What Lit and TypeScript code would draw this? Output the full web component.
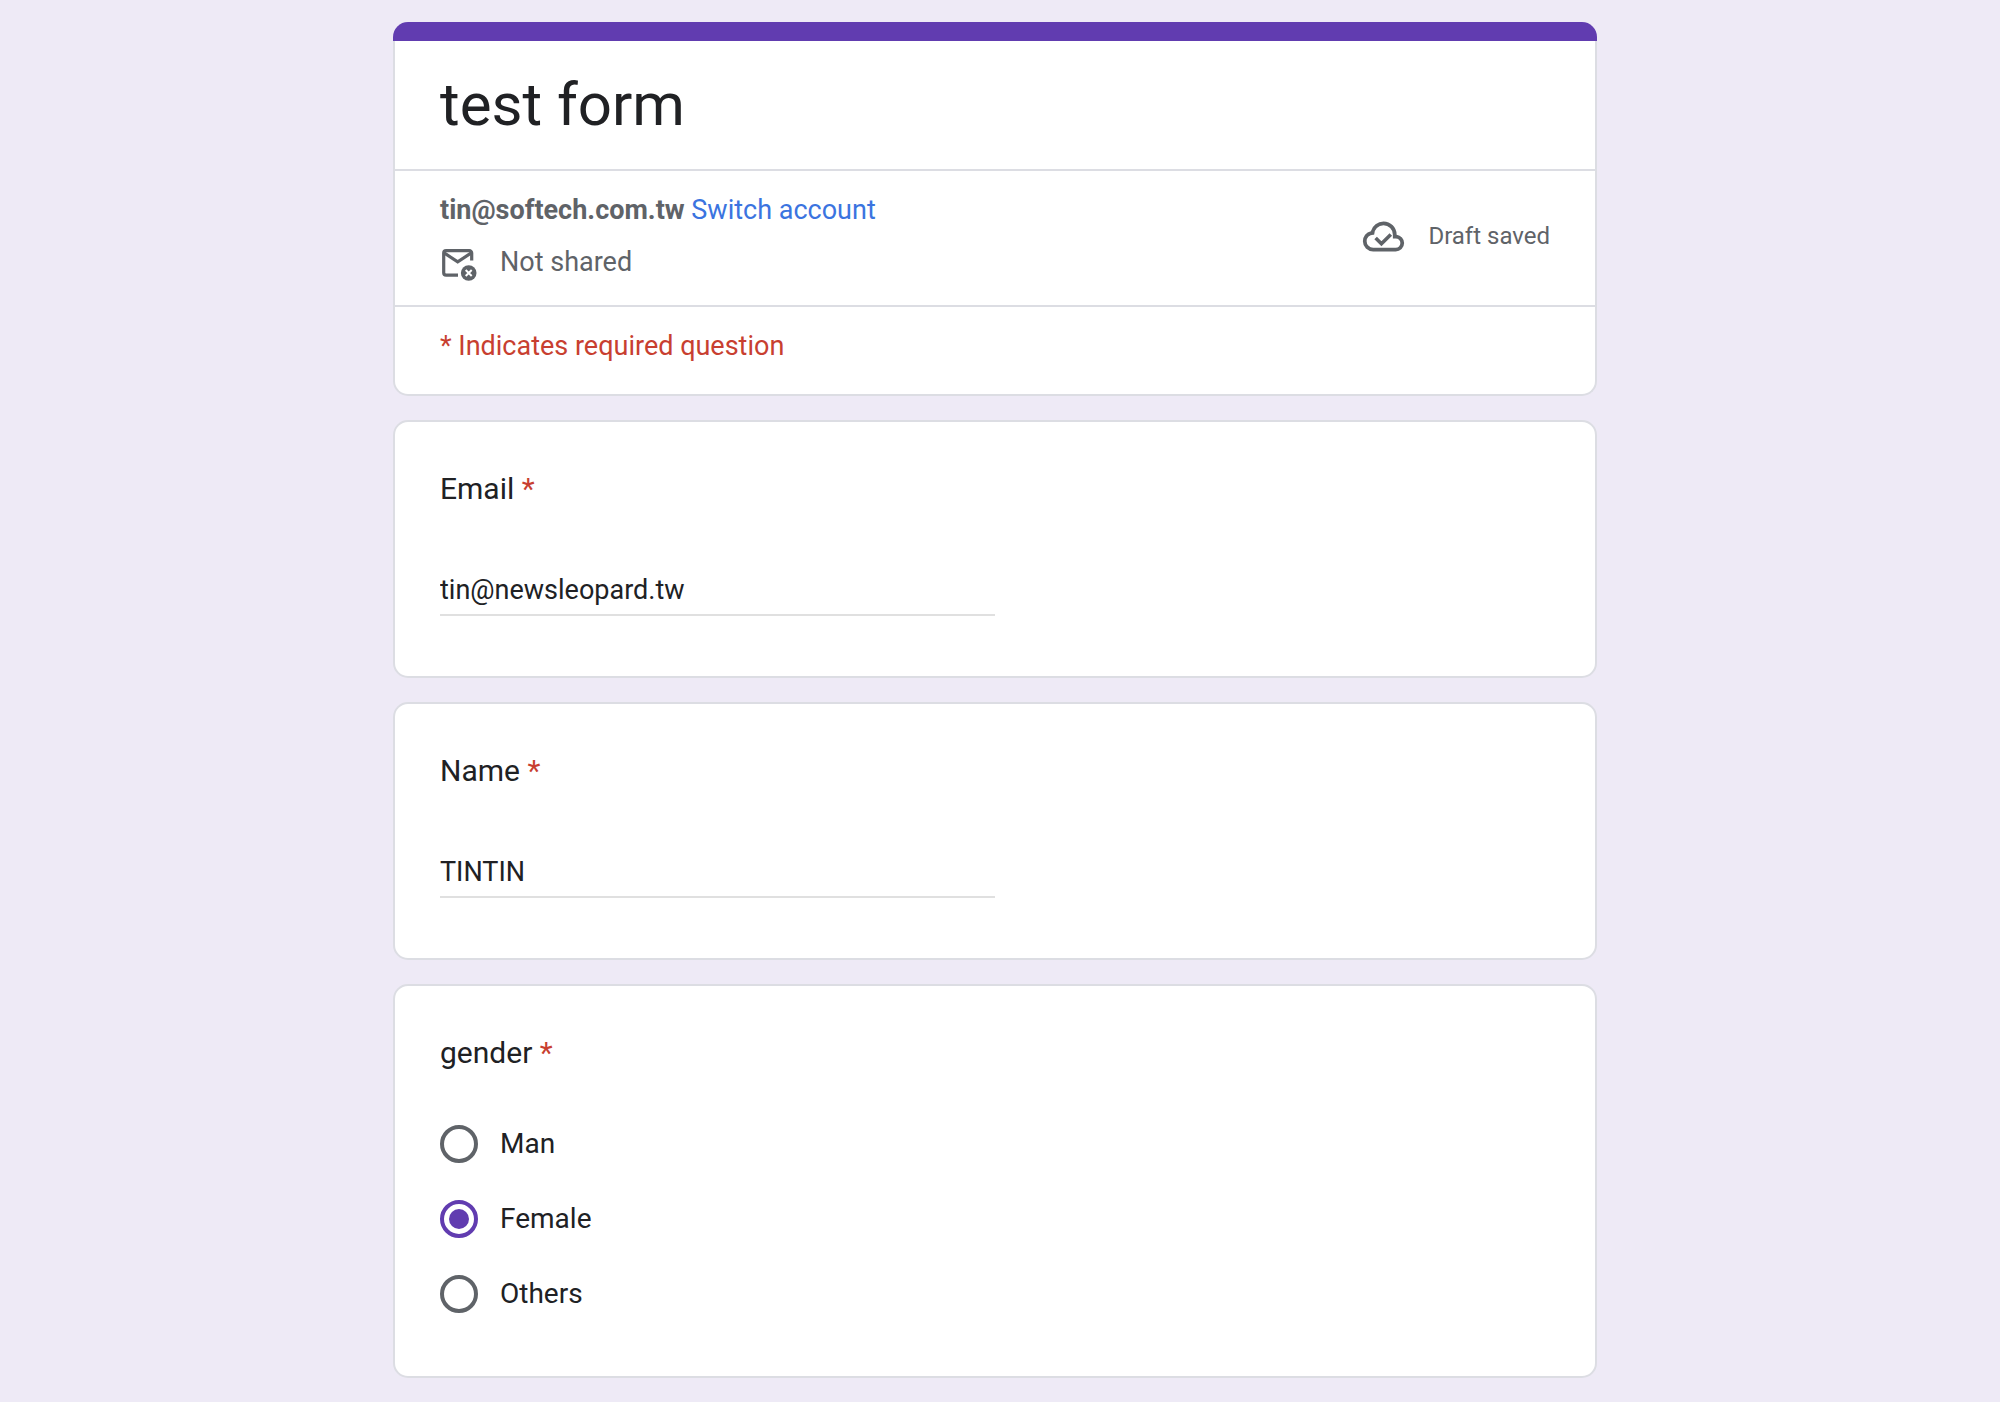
import { LitElement, html, css } from "lit";
import { customElement, property, state } from "lit/decorators.js";

const PALETTE = css`
  :host {
    --accent: #613cb0;
    --ink: #202124;
    --muted: #5f6368;
    --line: #dcdde3;
    --danger: #c83f30;
    --link: #3b74e0;
    display: block;
    box-sizing: border-box;
    font-family: Roboto, "Liberation Sans", sans-serif;
    color: var(--ink);
  }
  *,
  *::before {
    box-sizing: border-box;
  }
`;

const CARD = css`
  .card {
    background: #fff;
    border: 2px solid var(--line);
    border-radius: 15px;
    padding: 44px 45px 60px;
  }
  .question {
    display: block;
    padding: 0;
    font-size: 30px;
    line-height: 46px;
  }
  .star {
    color: var(--danger);
  }
`;

@customElement("form-header")
export class FormHeader extends LitElement {
  @property() heading = "";
  @property() account = "";

  static styles = [
    PALETTE,
    css`
      .bar {
        height: 19px;
        background: var(--accent);
        border-radius: 15px 15px 0 0;
      }
      .body {
        background: #fff;
        border: 2px solid var(--line);
        border-top: 0;
        border-radius: 0 0 15px 15px;
        font-size: 27px;
        line-height: 38px;
      }
      .title {
        margin: 0;
        padding: 26px 45px;
        font-size: 60px;
        font-weight: 400;
        line-height: 76px;
      }
      .account {
        display: flex;
        justify-content: space-between;
        padding: 20px 45px 24px;
        border: solid var(--line);
        border-width: 2px 0;
        color: var(--muted);
      }
      .who {
        display: flex;
        flex-direction: column;
        gap: 14px;
      }
      .address {
        font-weight: 700;
      }
      .switch {
        color: var(--link);
        text-decoration: none;
      }
      .shared {
        display: flex;
        align-items: center;
        gap: 22px;
      }
      .mail {
        width: 38px;
        height: 38px;
      }
      .draft {
        display: flex;
        align-items: center;
        gap: 22px;
        font-size: 24px;
      }
      .cloud {
        width: 45px;
        height: 45px;
      }
      .required {
        margin: 0;
        padding: 20px 45px 29px;
        color: var(--danger);
      }
    `,
  ];

  render() {
    return html`
      <header>
        <div class="bar"></div>
        <div class="body">
          <h1 class="title">${this.heading}</h1>
          <div class="account">
            <div class="who">
              <div>
                <span class="address">${this.account}</span>
                <a class="switch" href="#switch">Switch account</a>
              </div>
              <div class="shared">
                <svg class="mail" viewBox="0 0 38 38" fill="none" aria-hidden="true">
                  <path
                    d="M31.7 17.5V10a2.4 2.4 0 0 0-2.4-2.4H6.1A2.4 2.4 0 0 0 3.7 10v19.7a2.4 2.4 0 0 0 2.4 2.4H18"
                    stroke="#5f6368" stroke-width="3.2"/>
                  <path d="M4.5 10.2l13.2 8.6 13.2-8.6" stroke="#5f6368" stroke-width="3.2"/>
                  <circle cx="28.7" cy="30" r="7.8" fill="#5f6368"/>
                  <path d="M25.7 27l6 6M31.7 27l-6 6" stroke="#fff" stroke-width="2"/>
                </svg>
                <span>Not shared</span>
              </div>
            </div>
            <div class="draft">
              <svg class="cloud" viewBox="0 0 24 24" fill="#5f6368" aria-hidden="true">
                <path
                  d="M6.5 20Q4.22 20 2.61 18.43 1 16.85 1 14.58 1 12.63 2.17 11.1 3.35 9.57 5.25 9.15 5.88 6.85 7.75 5.43 9.63 4 12 4 14.93 4 16.96 6.04 19 8.07 19 11 20.73 11.2 21.86 12.5 23 13.78 23 15.5 23 17.38 21.69 18.69 20.38 20 18.5 20ZM6.5 18H18.5Q19.55 18 20.27 17.27 21 16.55 21 15.5 21 14.45 20.27 13.73 19.55 13 18.5 13H17V11Q17 8.93 15.54 7.46 14.08 6 12 6 9.93 6 8.46 7.46 7 8.93 7 11H6.5Q5.05 11 4.03 12.03 3 13.05 3 14.5 3 15.95 4.03 16.98 5.05 18 6.5 18Z"/>
                <path d="M7.8 12.8l3.1 3.1 5-5" fill="none" stroke="#5f6368" stroke-width="1.9"/>
              </svg>
              <span>Draft saved</span>
            </div>
          </div>
          <p class="required">* Indicates required question</p>
        </div>
      </header>
    `;
  }
}

@customElement("text-question")
export class TextQuestion extends LitElement {
  @property() label = "";
  @property() type = "text";
  @property() value = "";

  static styles = [
    PALETTE,
    CARD,
    css`
      .field {
        display: block;
        width: 50%;
        height: 48px;
        margin-top: 56px;
        padding: 0 0 2px;
        border: 0;
        border-bottom: 2px solid #e0e0e0;
        border-radius: 0;
        outline: 0;
        background: transparent;
        font: inherit;
        font-size: 27px;
        color: inherit;
      }
      .field:focus {
        border-color: var(--accent);
      }
    `,
  ];

  render() {
    return html`
      <section class="card">
        <label class="question" for="answer">${this.label} <span class="star">*</span></label>
        <input class="field" id="answer" type=${this.type} .value=${this.value} required />
      </section>
    `;
  }
}

@customElement("choice-question")
export class ChoiceQuestion extends LitElement {
  @property() label = "";
  @property({ attribute: false }) options: string[] = [];
  @state() selected = "Female";

  static styles = [
    PALETTE,
    CARD,
    css`
      .group {
        margin: 0;
        padding: 0;
        border: 0;
        min-width: 0;
      }
      .options {
        display: flex;
        flex-direction: column;
        align-items: flex-start;
        gap: 37px;
        padding: 49px 0 3px;
      }
      .option {
        display: flex;
        align-items: center;
        gap: 22px;
        font-size: 28px;
        line-height: 38px;
      }
      .radio {
        appearance: none;
        display: grid;
        place-items: center;
        width: 38px;
        height: 38px;
        margin: 0;
        border: 4px solid var(--muted);
        border-radius: 50%;
      }
      .radio:checked {
        border-color: var(--accent);
      }
      .radio:checked::before {
        content: "";
        width: 20px;
        height: 20px;
        border-radius: 50%;
        background: var(--accent);
      }
    `,
  ];

  render() {
    return html`
      <section class="card">
        <fieldset class="group">
          <legend class="question">${this.label} <span class="star">*</span></legend>
          <div class="options">
            ${this.options.map(
              (option) => html`
                <label class="option">
                  <input
                    class="radio"
                    type="radio"
                    name="choice"
                    .value=${option}
                    .checked=${option === this.selected}
                    @change=${() => (this.selected = option)}
                  />
                  <span>${option}</span>
                </label>
              `
            )}
          </div>
        </fieldset>
      </section>
    `;
  }
}

@customElement("app-root")
export class AppRoot extends LitElement {
  static styles = css`
    :host {
      display: block;
      box-sizing: border-box;
      min-height: 100vh;
      padding: 22px 34px 24px 24px;
      background: #eeeaf6;
    }
    .form {
      display: flex;
      flex-direction: column;
      gap: 24px;
      max-width: 1204px;
      margin: 0 auto;
    }
  `;

  render() {
    return html`
      <main class="form">
        <form-header heading="test form" account="tin@softech.com.tw"></form-header>
        <text-question label="Email" type="email" value="tin@newsleopard.tw"></text-question>
        <text-question label="Name" value="TINTIN"></text-question>
        <choice-question label="gender" .options=${["Man", "Female", "Others"]}></choice-question>
      </main>
    `;
  }
}
